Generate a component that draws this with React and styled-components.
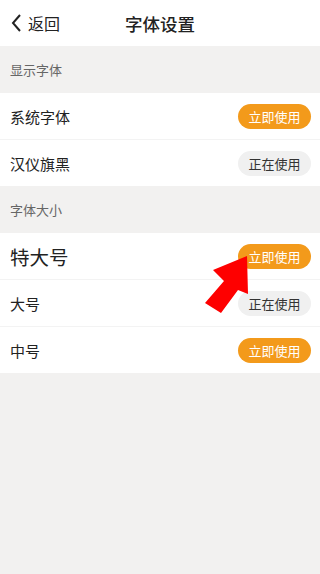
import React from 'react';
import styled, { createGlobalStyle } from 'styled-components';

const GlobalStyle = createGlobalStyle`
  html, body {
    margin: 0;
    padding: 0;
    background: #f2f1f0;
    font-family: "Noto Sans CJK SC", "Noto Sans", sans-serif;
  }
`;

const Page = styled.div`
  position: relative;
  width: 320px;
  min-height: 574px;
  background: #f2f1f0; /* light gray page */
`;

const Header = styled.div`
  position: relative;
  height: 46px;
  display: flex;
  align-items: center;
  justify-content: center;
  background: #fff;
`;

const Back = styled.div`
  position: absolute;
  left: 10px;
  top: 0;
  height: 46px;
  display: flex;
  align-items: center;
  gap: 4px;
  font-size: 16px;
  color: #222;
`;

const Title = styled.h1`
  margin: 0;
  font-size: 17.5px;
  font-weight: 500;
  color: #222;
`;

const SectionTitle = styled.div`
  height: 47px;
  display: flex;
  align-items: center;
  padding-left: 10px;
  font-size: 13px;
  color: #666;
`;

const List = styled.div`
  background: #fff;
`;

const Row = styled.div`
  height: 46px;
  display: flex;
  align-items: center;
  justify-content: space-between;
  padding: 0 9px 0 10px;
  border-bottom: 1px solid #f3f3f3;

  &:last-child {
    border-bottom: none;
  }
`;

const Label = styled.span`
  font-size: ${(p) => (p.$big ? '19.5px' : '15px')};
  color: #222;
`;

const UseButton = styled.button`
  width: 73px;
  height: 25px;
  border: none;
  border-radius: 13px;
  padding: 0;
  font-family: inherit;
  font-size: 13px;
  background: ${(p) => (p.$active ? '#f0f0f0' : '#f39a1b')};
  color: ${(p) => (p.$active ? '#333' : '#fff')};
`;

const Arrow = styled.svg`
  position: absolute;
  left: 0;
  top: 0;
  pointer-events: none;
`;

const fonts = [
  { name: '系统字体', active: false },
  { name: '汉仪旗黑', active: true },
];

const sizes = [
  { name: '特大号', active: false, big: true },
  { name: '大号', active: true },
  { name: '中号', active: false },
];

const FontRow = ({ item }) => (
  <Row>
    <Label $big={item.big}>{item.name}</Label>
    <UseButton $active={item.active}>{item.active ? '正在使用' : '立即使用'}</UseButton>
  </Row>
);

export default function App() {
  return (
    <Page>
      <GlobalStyle />
      <Header>
        <Back>
          <svg width="14" height="20" viewBox="0 0 14 20">
            <path d="M10 2 L3 10 L10 18" fill="none" stroke="#222" strokeWidth="2" />
          </svg>
          <span>返回</span>
        </Back>
        <Title>字体设置</Title>
      </Header>

      <SectionTitle>显示字体</SectionTitle>
      <List>
        {fonts.map((f) => (
          <FontRow key={f.name} item={f} />
        ))}
      </List>

      <SectionTitle>字体大小</SectionTitle>
      <List>
        {sizes.map((s) => (
          <FontRow key={s.name} item={s} />
        ))}
      </List>

      <Arrow width="320" height="574" viewBox="0 0 320 574">
        <polygon
          points="247,256 213,270 224,281 205,303 221,313 238,290 248,294"
          fill="#fe0000"
        />
      </Arrow>
    </Page>
  );
}
